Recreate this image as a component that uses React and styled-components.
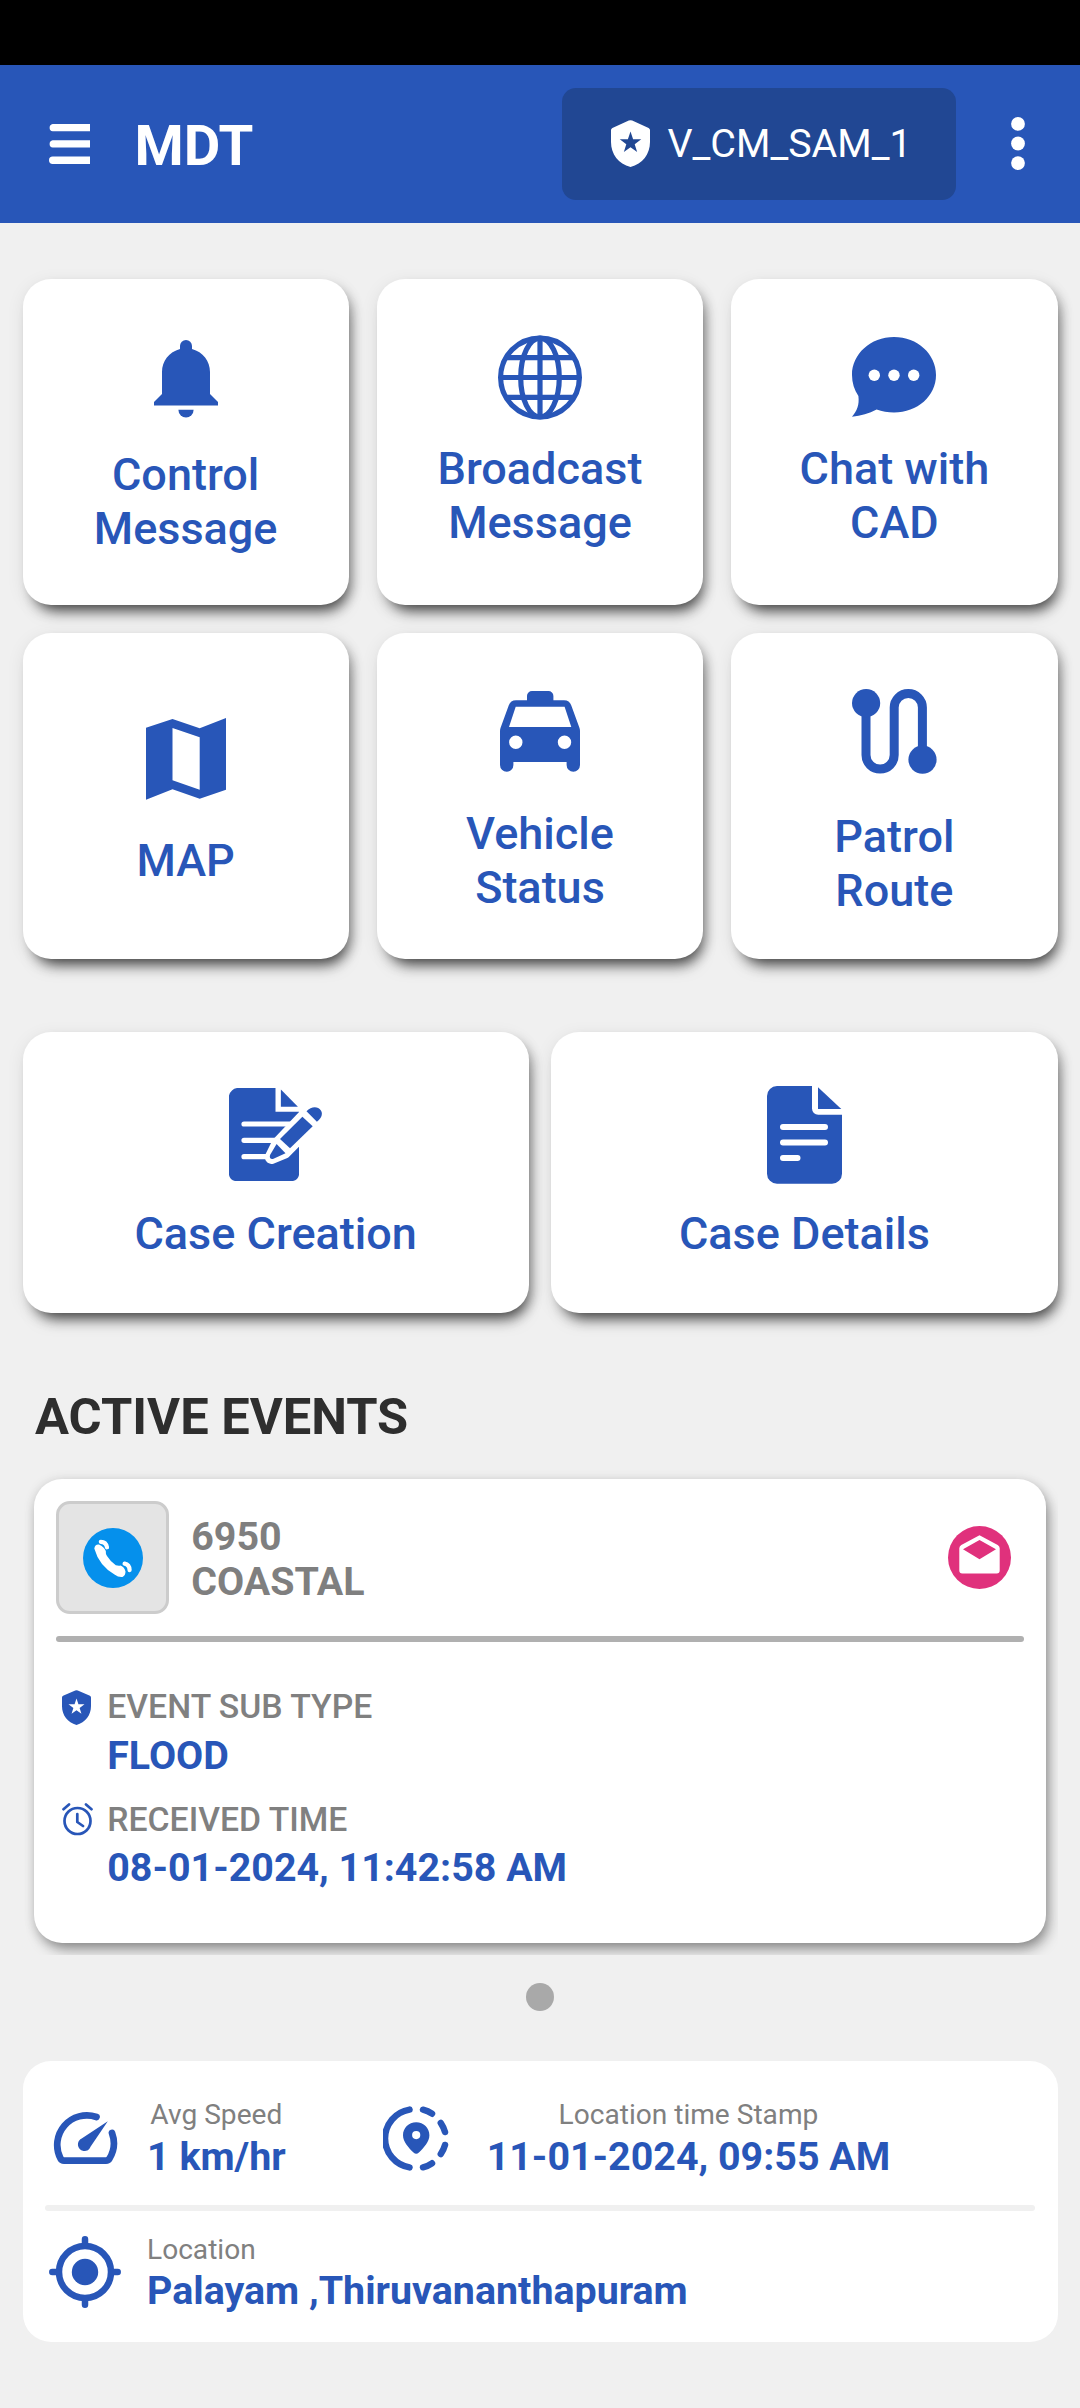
import React from "react";
import styled, { createGlobalStyle } from "styled-components";

const BLUE = "#2856b8";
const GREY = "#808080";

const GlobalStyle = createGlobalStyle`
  * { box-sizing: border-box; }
  body {
    margin: 0;
    background: #f0f0f0;
    font-family: Roboto, "Noto Sans", sans-serif;
  }
  svg { display: block; flex: none; }
`;

const Screen = styled.div`
  width: 1080px;
  height: 2408px;
  overflow: hidden;
  display: flex;
  flex-direction: column;
  background: #f0f0f0;
`;

const StatusBar = styled.div`
  height: 65px;
  flex: none;
  background: #000;
`;

const AppBar = styled.header`
  height: 157.5px;
  flex: none;
  display: flex;
  align-items: center;
  padding: 0 55.500px 0 49px;
  background: ${BLUE};
  color: #fff;
`;

const Title = styled.h1`
  margin: 4px auto 0 44.500px;
  font-size: 56.25px;
  line-height: 66px;
  font-weight: 700;
`;

const UnitBadge = styled.div`
  width: 393.5px;
  height: 112.5px;
  margin-right: 55px;
  padding-left: 49px;
  display: flex;
  align-items: center;
  gap: 17.500px;
  border-radius: 14px;
  background: #214793;
  font-size: 39.4px;
  line-height: 46px;
`;

const Content = styled.main`
  display: flex;
  flex-direction: column;
  padding: 56.5px 22.5px 0;
`;

const TileGrid = styled.div`
  display: grid;
  grid-template-columns: repeat(${(p) => p.$columns}, 1fr);
  grid-auto-rows: ${(p) => p.$rowHeight}px;
  gap: ${(p) => p.$gap}px;
  margin-bottom: ${(p) => p.$after}px;
`;

const Tile = styled.button`
  display: flex;
  flex-direction: column;
  align-items: center;
  margin: 0;
  border: 0;
  padding: ${(p) => p.$top}px 20px 0;
  border-radius: 28px;
  background: #fff;
  color: ${BLUE};
  font-family: inherit;
  box-shadow: 4px 15px 16px -10px rgba(0, 0, 0, 0.6), 6px 6px 12px -3px rgba(0, 0, 0, 0.34),
    0 4px 18px rgba(0, 0, 0, 0.08);
`;

const TileLabel = styled.span`
  width: ${(p) => p.$width}px;
  margin-top: ${(p) => p.$gap}px;
  font-size: 45px;
  line-height: 54px;
  font-weight: 500;
  text-align: center;
`;

const SectionTitle = styled.h2`
  margin: 1px 0 15.700px 12.500px;
  font-size: 50.6px;
  line-height: 60px;
  font-weight: 700;
  color: #2e2e2e;
`;

const EventPager = styled.div`
  height: 492px;
  padding: 16px 11.25px 12px;
  overflow: hidden;
`;

const EventCard = styled.article`
  height: 464px;
  padding: 22.5px;
  border-radius: 28px;
  background: #fff;
  box-shadow: 4px 8px 14px -2px rgba(0, 0, 0, 0.4), 0 1px 12px rgba(0, 0, 0, 0.12);
`;

const EventHeader = styled.div`
  display: flex;
  align-items: center;
`;

const SourceBox = styled.div`
  width: 112.5px;
  height: 112.5px;
  display: flex;
  align-items: center;
  justify-content: center;
  border: 3px solid #cccccc;
  border-radius: 14px;
  background: #e4e4e4;
`;

const EventName = styled.div`
  margin: 2px auto 0 22.500px;
  font-size: 39.4px;
  line-height: 45px;
  font-weight: 700;
  color: #7f7f7f;
`;

const MailBox = styled.div`
  margin-right: 13px;
`;

const Rule = styled.div`
  height: 5.6px;
  margin: ${(p) => p.$margin};
  border-radius: 3px;
  background: ${(p) => p.$color};
`;

const Field = styled.div`
  display: grid;
  grid-template-columns: 51px 1fr;
  margin-bottom: ${(p) => p.$after}px;
`;

const FieldIcon = styled.div`
  display: flex;
  align-items: center;
  padding-left: ${(p) => p.$indent}px;
`;

const FieldLabel = styled.div`
  font-size: 33.75px;
  line-height: 40px;
  font-weight: 500;
  color: ${GREY};
`;

const FieldValue = styled.div`
  grid-column: 2;
  padding-top: 5.700px;
  font-size: 39.4px;
  line-height: 46px;
  font-weight: 700;
  color: ${BLUE};
`;

const PageDot = styled.div`
  width: 28px;
  height: 28px;
  margin: 28.5px auto 50px;
  border-radius: 50%;
  background: #a9a9a9;
`;

const StatusCard = styled.section`
  height: 281px;
  padding: 0 22.5px;
  border-radius: 28px;
  background: #fff;
`;

const StatusRow = styled.div`
  display: flex;
  height: ${(p) => p.$height}px;
  padding: ${(p) => p.$pad};
`;

const Reading = styled.div`
  display: flex;
  flex-direction: column;
  align-items: ${(p) => p.$align || "flex-start"};
  margin-left: ${(p) => p.$left}px;
`;

const ReadingIcon = styled.div`
  padding-top: ${(p) => p.$top}px;
  margin-left: ${(p) => p.$left || 0}px;
`;

const Caption = styled.span`
  font-size: 28.1px;
  line-height: 34px;
  color: ${GREY};
  white-space: nowrap;
`;

const Value = styled.span`
  margin-top: 1.500px;
  font-size: 39.4px;
  line-height: 46px;
  font-weight: 700;
  color: ${BLUE};
  white-space: nowrap;
`;

const MenuIcon = () => (
  <svg width="41" height="40" viewBox="0 0 41 40" fill="#fff">
    <path d="M41 0H3.7a3.7 3.7 0 0 0 0 7.3H41zM41 16.3H3.7a3.7 3.7 0 0 0 0 7.3H41zM41 32.6H3.7a3.7 3.7 0 0 0 0 7.4H41z" />
  </svg>
);

const MoreIcon = () => (
  <svg width="14" height="53" viewBox="0 0 14 53" fill="#fff">
    <circle cx="7" cy="6.9" r="6.9" />
    <circle cx="7" cy="26.5" r="6.9" />
    <circle cx="7" cy="46.1" r="6.9" />
  </svg>
);

const ShieldIcon = ({ width, color, star }) => (
  <svg width={width} height={(width * 47) / 39} viewBox="0 0 39 47">
    <path
      fill={color}
      d="M17.8.6q1.7-.8 3.4 0L37.6 7.9Q39 8.6 39 10V22C39 34 31.500 44 19.500 47 7.500 44 0 34 0 22V10Q0 8.600 1.400 7.900z"
    />
    <path
      fill={star}
      d="M19.5 11.500l2.600 7.740 8.150.06-6.550 4.860 2.450 7.790-6.650-4.750-6.650 4.750 2.450-7.790-6.550-4.860 8.150-.06z"
    />
  </svg>
);

const BellIcon = () => (
  <svg width="64" height="78" viewBox="0 0 64 78" fill={BLUE}>
    <path d="M26 9V6a6 6 0 0 1 12 0v3c11 3 18 12 18 23v22l8 8v3.500H0V62l8-8V32C8 21 15 12 26 9z" />
    <path d="M24.400 69.700h15.200a7.600 7.700 0 0 1-15.200 0z" />
  </svg>
);

const GlobeIcon = () => (
  <svg width="84" height="85" viewBox="0 0 84 85" fill="none" stroke={BLUE} strokeWidth="5.200">
    <circle cx="42" cy="42.500" r="39.400" />
    <ellipse cx="42" cy="42.500" rx="19.300" ry="39.400" />
    <path d="M42 2v81M2.500 42.500h79M7 22.700h70M7 62.300h70" />
  </svg>
);

const ChatIcon = () => (
  <svg width="84" height="80" viewBox="0 0 84 80">
    <path
      fill={BLUE}
      d="M42 0c23.500 0 42 17 42 38S65.500 75.500 42 75.500c-6 0-12-1-17.400-3C17 76.500 9 79 0 79.700c5-5.500 7.500-12 6.400-20.700C2.300 53 0 46 0 38 0 17 18.500 0 42 0z"
    />
    <g fill="#fff">
      <circle cx="22.300" cy="38.300" r="5.700" />
      <circle cx="42" cy="38.300" r="5.700" />
      <circle cx="61.700" cy="38.300" r="5.700" />
    </g>
  </svg>
);

const MapIcon = () => (
  <svg width="80" height="82" viewBox="0 0 80 82">
    <path
      fill={BLUE}
      fillRule="evenodd"
      d="M0 9.700L26.500 1l27.200 9.300L80 0v71.700l-26.300 9-27.200-9.400L0 81.700zM26.500 10v52.300l27.200 9.400V19.300z"
    />
  </svg>
);

const CarIcon = () => (
  <svg width="80" height="81" viewBox="0 0 80 81">
    <path
      fill={BLUE}
      fillRule="evenodd"
      d="M27 9.300V5a5 5 0 0 1 5-5h16.400a5 5 0 0 1 5 5v4.300H64q5.500 0 7.300 5.200L79.500 37q.5 1.500.5 3v34a6.700 6.700 0 0 1-13.400 0v-3H13.400v3A6.700 6.700 0 0 1 0 74V40q0-1.500.5-3l8.200-22.500Q10.500 9.300 16 9.300zM15.700 15.700L9 36h62.300l-6.700-20.300zM15.800 44.600a6.700 6.700 0 1 0 0 13.400a6.700 6.700 0 0 0 0-13.400zM64.500 44.600a6.700 6.700 0 1 0 0 13.400a6.700 6.700 0 0 0 0-13.400z"
    />
  </svg>
);

const RouteIcon = () => (
  <svg width="85" height="85" viewBox="0 0 85 85">
    <path
      fill="none"
      stroke={BLUE}
      strokeWidth="9"
      d="M14 14v52a14.100 14.100 0 0 0 28.200 0V18.600a14.100 14.100 0 0 1 28.200 0V71"
    />
    <circle cx="14.100" cy="14.100" r="14.100" fill={BLUE} />
    <circle cx="70.500" cy="70.700" r="14.100" fill={BLUE} />
  </svg>
);

const CaseCreateIcon = () => (
  <svg width="93" height="93" viewBox="0 0 93 93" fill={BLUE}>
    <path d="M8 0h38.500v23.700H70V87q-1 5-6 6H6q-5-1-6-6V7.500Q2 1 8 0z" />
    <path d="M51.900 1.500v17.200h17z" />
    <path d="M15 36h46M15 52.300h31M15 68.700h24" stroke="#fff" strokeWidth="5.200" strokeLinecap="round" />
    <path
      d="M77.500 23.500C83 18 93 25 88 33.500L56.500 65.300 42.500 71q-2-.5-1.500-2.500L47.600 55z"
      fill="#fff"
      stroke="#fff"
      strokeWidth="10"
      strokeLinejoin="round"
    />
    <path d="M73.400 28.700l10.300 9.600L61 60.300 51 51z" />
    <path d="M77.500 23.300l10.400 10.400c4-3 6.500-7.500 4-11.200-3-4.500-9.500-4.500-14.400.8z" />
    <path d="M47.600 56l8.900 9.300-12 5.500c-3 .8-4.500-1-3.300-4z" />
  </svg>
);

const CaseDetailsIcon = () => (
  <svg width="75" height="98" viewBox="0 0 75 98" fill={BLUE}>
    <path d="M10 0h35v22.500a6.200 6.200 0 0 0 6.200 6.200H75v59a10 10 0 0 1-10 10H10a10 10 0 0 1-10-10V10A10 10 0 0 1 10 0z" />
    <path d="M51 1.300V23h23.300z" />
    <path d="M16 41h42M16 56.500h42M16 72h14.500" stroke="#fff" strokeWidth="6" strokeLinecap="round" />
  </svg>
);

const PhoneIcon = () => (
  <svg width="60" height="60" viewBox="0 0 60 60">
    <circle cx="30" cy="30" r="30" fill="#0590ec" />
    <path
      fill="#fff"
      d="M11.300 20.500Q12 16 16 16.500 21 18.500 22.800 23 22.500 25.500 24 28 27 33 32.800 37.200 35.500 38 37.500 37.500 41.500 39 42.500 43.500 42.500 47.500 39.500 49 35.500 49.500 31.500 46.500 16 37.500 11.300 20.500z"
    />
    <path d="M17.800 13.900Q23 14 24 19.300M41.600 35.600q4.900.9 5 6.500" fill="none" stroke="#fff" strokeWidth="4.200" strokeLinecap="round" />
  </svg>
);

const MailIcon = () => (
  <svg width="63" height="63" viewBox="0 0 63 63">
    <circle cx="31.500" cy="31.500" r="31.500" fill="#e0317c" />
    <path
      fill="#fff"
      fillRule="evenodd"
      d="M31.500 9.200l18.200 9.800q2 1.200 2 3.300V44.500a3 3 0 0 1-3 3H14.300a3 3 0 0 1-3-3V22.300q0-2.100 2-3.300zM31.500 14L15 23.200l16.500 10L48 23.200z"
    />
  </svg>
);

const AlarmIcon = () => (
  <svg width="31" height="33" viewBox="0 0 31 33" fill="none" stroke={BLUE} strokeWidth="2.700" strokeLinecap="round" strokeLinejoin="round">
    <circle cx="15.500" cy="18" r="13" />
    <path d="M15.300 11v8l5.700 4M1.500 6.200l5.500-4.700M29.500 6.200L24 1.500" />
  </svg>
);

const SpeedIcon = () => (
  <svg width="66" height="53" viewBox="0 0 66 53">
    <path
      fill="none"
      stroke={BLUE}
      strokeWidth="6.700"
      strokeLinecap="round"
      strokeLinejoin="round"
      d="M60 22A29.600 29.600 0 0 1 57.500 47.500Q56.300 49.600 54 49.600H12Q9.700 49.600 8.500 47.500A29.600 29.600 0 0 1 44.500 6"
    />
    <path fill={BLUE} d="M55.800 10.300L38.500 35.800a6.500 6.500 0 1 1-8.800-8.200z" />
  </svg>
);

const PinTimeIcon = () => (
  <svg width="66" height="65" viewBox="-0.5 0 66 65">
    <path
      fill="none"
      stroke={BLUE}
      strokeWidth="6.500"
      strokeLinecap="round"
      d="M26 3.600a29.300 29.300 0 0 0 0 57.800M39.500 3.700q5 1.200 9 4M57.300 17q3 4.500 4.200 9M57.300 48q3-4.500 4.200-9M39.500 61.300q5-1.200 9-4"
    />
    <path
      fill={BLUE}
      fillRule="evenodd"
      d="M32.700 16.200c7.500 0 13.200 5.800 13.200 13 0 6.500-5.500 12.300-10.500 17.300q-2.700 2.400-5.400 0c-5-5-10.500-10.800-10.500-17.300 0-7.200 5.700-13 13.200-13zM32.700 25a4.100 4.100 0 1 0 0 8.200a4.100 4.100 0 0 0 0-8.200z"
    />
  </svg>
);

const TargetIcon = () => (
  <svg width="72" height="72" viewBox="0 0 72 72">
    <g fill="none" stroke={BLUE} strokeWidth="6.500" strokeLinecap="round">
      <circle cx="36" cy="36" r="26" />
      <path d="M36 3.300V9M36 63v5.700M3.300 36H9M63 36h5.700" />
    </g>
    <circle cx="36" cy="36" r="13.200" fill={BLUE} />
  </svg>
);

const actions = [
  { label: "Control Message", Icon: BellIcon, top: 60.5, gap: 30.3, width: 220 },
  { label: "Broadcast Message", Icon: GlobeIcon, top: 55.5, gap: 22, width: 240 },
  { label: "Chat with CAD", Icon: ChatIcon, top: 57.5, gap: 25, width: 220 },
  { label: "MAP", Icon: MapIcon, top: 85, gap: 34, width: 220 },
  { label: "Vehicle Status", Icon: CarIcon, top: 58, gap: 35, width: 200 },
  { label: "Patrol Route", Icon: RouteIcon, top: 56, gap: 35.5, width: 200 },
];

const cases = [
  { label: "Case Creation", Icon: CaseCreateIcon, top: 56, gap: 26, width: 400 },
  { label: "Case Details", Icon: CaseDetailsIcon, top: 54, gap: 23, width: 400 },
];

const renderTile = ({ label, Icon, top, gap, width }) => (
  <Tile key={label} $top={top}>
    <Icon />
    <TileLabel $gap={gap} $width={width}>
      {label}
    </TileLabel>
  </Tile>
);

export default function App() {
  return (
    <>
      <GlobalStyle />
      <Screen>
        <StatusBar />
        <AppBar>
          <MenuIcon />
          <Title>MDT</Title>
          <UnitBadge>
            <ShieldIcon width={39} color="#fff" star="#214793" />
            V_CM_SAM_1
          </UnitBadge>
          <MoreIcon />
        </AppBar>
        <Content>
          <TileGrid $columns={3} $rowHeight={326} $gap={28.1} $after={73}>
            {actions.map(renderTile)}
          </TileGrid>
          <TileGrid $columns={2} $rowHeight={281.2} $gap={22.5} $after={73}>
            {cases.map(renderTile)}
          </TileGrid>
          <SectionTitle>ACTIVE EVENTS</SectionTitle>
          <EventPager>
            <EventCard>
              <EventHeader>
                <SourceBox>
                  <PhoneIcon />
                </SourceBox>
                <EventName>
                  6950
                  <br />
                  COASTAL
                </EventName>
                <MailBox>
                  <MailIcon />
                </MailBox>
              </EventHeader>
              <Rule $margin="22.5px 0 45px" $color="#b0b0b0" />
              <Field $after={21}>
                <FieldIcon $indent={6}>
                  <ShieldIcon width={29} color={BLUE} star="#fff" />
                </FieldIcon>
                <FieldLabel>EVENT SUB TYPE</FieldLabel>
                <FieldValue>FLOOD</FieldValue>
              </Field>
              <Field $after={0}>
                <FieldIcon $indent={5.5}>
                  <AlarmIcon />
                </FieldIcon>
                <FieldLabel>RECEIVED TIME</FieldLabel>
                <FieldValue>08-01-2024, 11:42:58 AM</FieldValue>
              </Field>
            </EventCard>
          </EventPager>
          <PageDot />
          <StatusCard>
            <StatusRow $height={143.5} $pad="37px 0 0 7px">
              <ReadingIcon $top={13}>
                <SpeedIcon />
              </ReadingIcon>
              <Reading $left={29} $align="center">
                <Caption>Avg Speed</Caption>
                <Value>1 km/hr</Value>
              </Reading>
              <ReadingIcon $top={7.5} $left={97.5}>
                <PinTimeIcon />
              </ReadingIcon>
              <Reading $left={37.5} $align="center">
                <Caption>Location time Stamp</Caption>
                <Value>11-01-2024, 09:55 AM</Value>
              </Reading>
            </StatusRow>
            <Rule $margin="0" $color="#f0f0f0" />
            <StatusRow $height={131} $pad="22px 0 0 4px">
              <ReadingIcon $top={3.5}>
                <TargetIcon />
              </ReadingIcon>
              <Reading $left={26}>
                <Caption>Location</Caption>
                <Value>Palayam ,Thiruvananthapuram</Value>
              </Reading>
            </StatusRow>
          </StatusCard>
        </Content>
      </Screen>
    </>
  );
}
